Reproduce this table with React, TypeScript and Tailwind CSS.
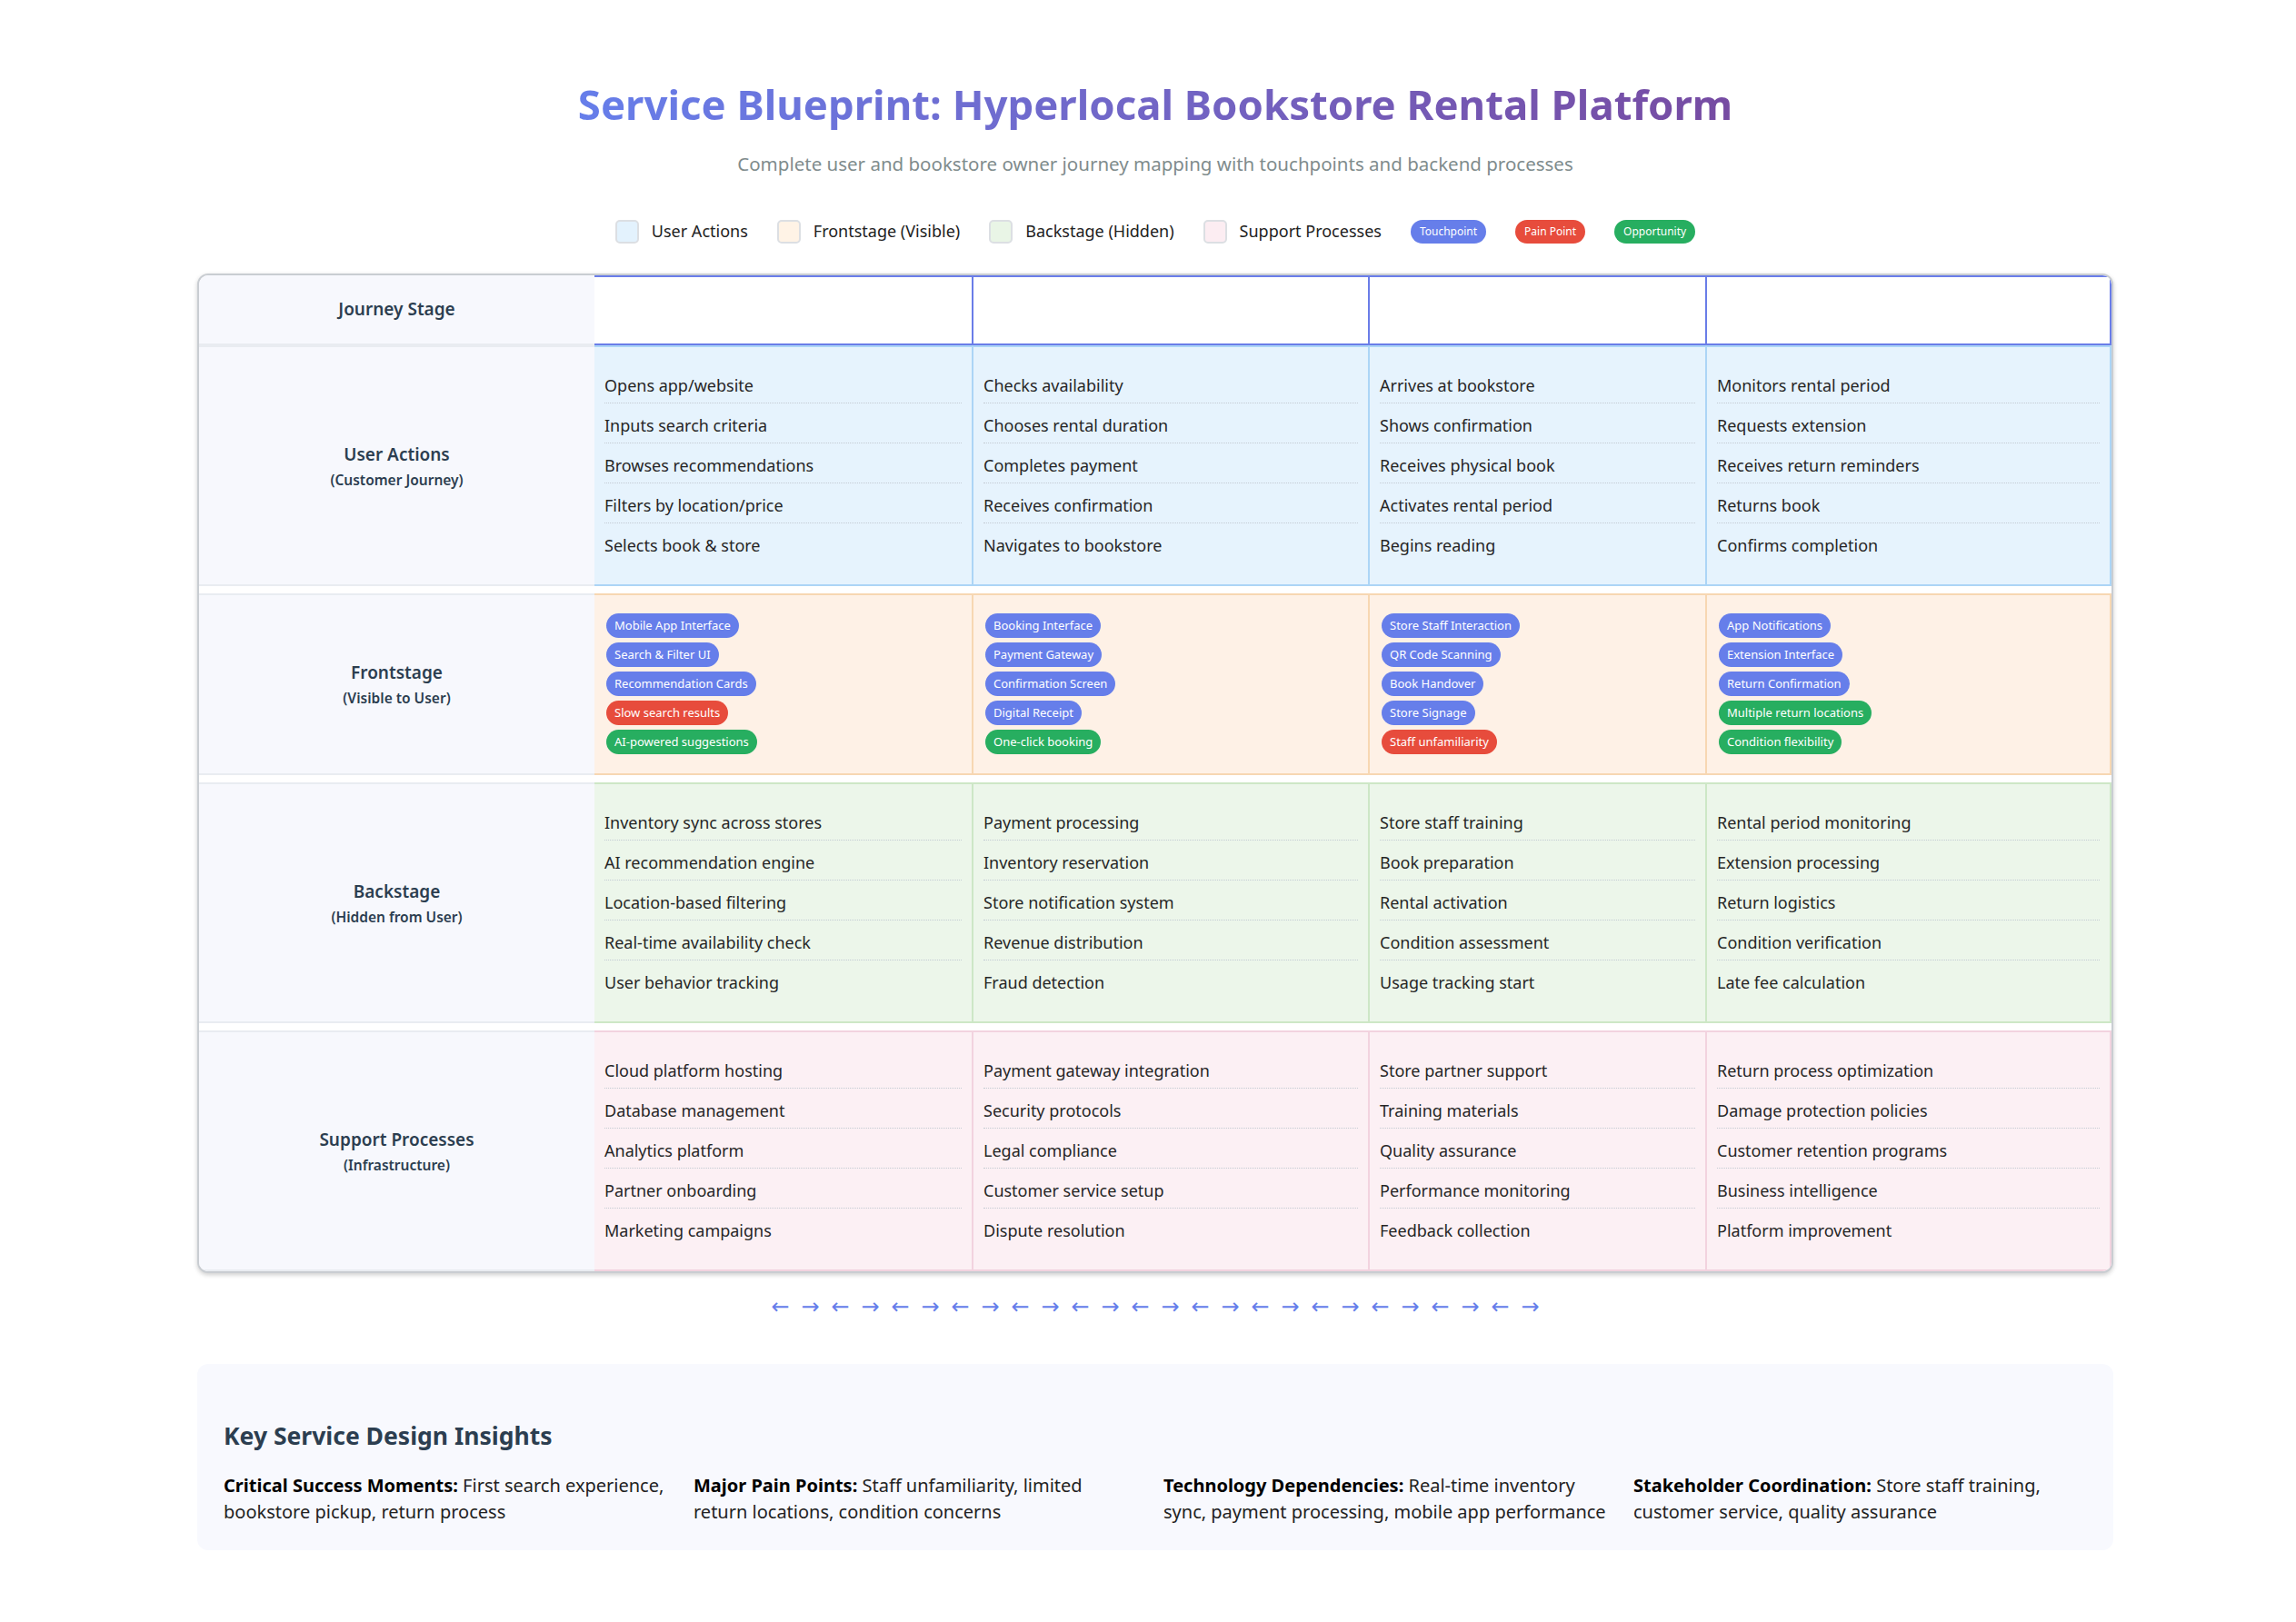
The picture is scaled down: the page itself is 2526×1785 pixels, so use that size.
import React from 'react';

type Kind = 't' | 'p' | 'o';

interface Lane {
  title: string;
  sub: string;
  cell: string;
  columns: string[][];
}

// ブループリントの各レーン（フロントステージはピル表示なので別扱い）
const userActions: Lane = {
  title: 'User Actions',
  sub: '(Customer Journey)',
  cell: 'bg-[#e6f3fd] border-[#acd5f6]',
  columns: [
    ['Opens app/website', 'Inputs search criteria', 'Browses recommendations', 'Filters by location/price', 'Selects book & store'],
    ['Checks availability', 'Chooses rental duration', 'Completes payment', 'Receives confirmation', 'Navigates to bookstore'],
    ['Arrives at bookstore', 'Shows confirmation', 'Receives physical book', 'Activates rental period', 'Begins reading'],
    ['Monitors rental period', 'Requests extension', 'Receives return reminders', 'Returns book', 'Confirms completion'],
  ],
};

const backstage: Lane = {
  title: 'Backstage',
  sub: '(Hidden from User)',
  cell: 'bg-[#ecf6ea] border-[#cde7c6]',
  columns: [
    ['Inventory sync across stores', 'AI recommendation engine', 'Location-based filtering', 'Real-time availability check', 'User behavior tracking'],
    ['Payment processing', 'Inventory reservation', 'Store notification system', 'Revenue distribution', 'Fraud detection'],
    ['Store staff training', 'Book preparation', 'Rental activation', 'Condition assessment', 'Usage tracking start'],
    ['Rental period monitoring', 'Extension processing', 'Return logistics', 'Condition verification', 'Late fee calculation'],
  ],
};

const support: Lane = {
  title: 'Support Processes',
  sub: '(Infrastructure)',
  cell: 'bg-[#fcf0f4] border-[#f2d3df]',
  columns: [
    ['Cloud platform hosting', 'Database management', 'Analytics platform', 'Partner onboarding', 'Marketing campaigns'],
    ['Payment gateway integration', 'Security protocols', 'Legal compliance', 'Customer service setup', 'Dispute resolution'],
    ['Store partner support', 'Training materials', 'Quality assurance', 'Performance monitoring', 'Feedback collection'],
    ['Return process optimization', 'Damage protection policies', 'Customer retention programs', 'Business intelligence', 'Platform improvement'],
  ],
};

const frontstage: [string, Kind][][] = [
  [['Mobile App Interface', 't'], ['Search & Filter UI', 't'], ['Recommendation Cards', 't'], ['Slow search results', 'p'], ['AI-powered suggestions', 'o']],
  [['Booking Interface', 't'], ['Payment Gateway', 't'], ['Confirmation Screen', 't'], ['Digital Receipt', 't'], ['One-click booking', 'o']],
  [['Store Staff Interaction', 't'], ['QR Code Scanning', 't'], ['Book Handover', 't'], ['Store Signage', 't'], ['Staff unfamiliarity', 'p']],
  [['App Notifications', 't'], ['Extension Interface', 't'], ['Return Confirmation', 't'], ['Multiple return locations', 'o'], ['Condition flexibility', 'o']],
];

const pillColor: Record<Kind, string> = {
  t: 'bg-[#667eea]',
  p: 'bg-[#e74c3c]',
  o: 'bg-[#27ae60]',
};

const insights = [
  ['Critical Success Moments:', 'First search experience, bookstore pickup, return process'],
  ['Major Pain Points:', 'Staff unfamiliarity, limited return locations, condition concerns'],
  ['Technology Dependencies:', 'Real-time inventory sync, payment processing, mobile app performance'],
  ['Stakeholder Coordination:', 'Store staff training, customer service, quality assurance'],
];

const GRID = 'grid grid-cols-[435px_417px_436px_371px_445px]';

const LaneLabel: React.FC<{ title: string; sub: string }> = ({ title, sub }) => (
  <div className="flex flex-col items-center justify-center gap-[6px] bg-[#f7f8fd] border-y-2 border-[#e9ecf1] text-[#2c3e50]">
    <div className="text-[19px] font-semibold leading-[24px]">{title}</div>
    <div className="text-[15.5px] font-semibold leading-[20px]">{sub}</div>
  </div>
);

const ListLane: React.FC<{ lane: Lane; first?: boolean }> = ({ lane, first }) => (
  <div className={`${GRID} ${first ? '' : 'mt-2'}`}>
    <LaneLabel title={lane.title} sub={lane.sub} />
    {lane.columns.map((items, ci) => (
      <div key={ci} className={`border-y-2 border-r-2 px-[11px] pt-6 pb-6 ${lane.cell}`}>
        <ul>
          {items.map((it, i) => (
            <li
              key={it}
              className={
                i < items.length - 1
                  ? 'py-[6px] mb-[6px] leading-[25px] border-b border-dotted border-[#c3cbd3]'
                  : 'py-[6px] leading-[25px]'
              }
            >
              {it}
            </li>
          ))}
        </ul>
      </div>
    ))}
  </div>
);

export default function App() {
  return (
    <div
      className="min-h-[1785px] bg-white text-[#262626] text-[18px]"
      style={{ fontFamily: '"Noto Sans", "Open Sans", sans-serif' }}
    >
      <div className="flex justify-center pl-[16px] pt-[87px]">
        <div className="w-[2108px]">
          {/* ヘッダー */}
          <h1 className="text-center text-[45.5px] font-bold leading-[54px]">
            <span className="bg-linear-to-r from-[#667eea] to-[#764ba2] bg-clip-text text-transparent">
              Service Blueprint: Hyperlocal Bookstore Rental Platform
            </span>
          </h1>
          <p className="mt-[25px] text-center text-[20.5px] leading-[28px] text-[#7f8c8d]">
            Complete user and bookstore owner journey mapping with touchpoints and backend processes
          </p>

          {/* 凡例 */}
          <div className="mt-[47px] flex items-center justify-center gap-[32px] text-[18px] text-[#222]">
            {[
              ['User Actions', 'bg-[#e3f2fd]'],
              ['Frontstage (Visible)', 'bg-[#fff3e6]'],
              ['Backstage (Hidden)', 'bg-[#e9f5e6]'],
              ['Support Processes', 'bg-[#fcedf2]'],
            ].map(([label, bg]) => (
              <div key={label} className="flex items-center gap-[14px]">
                <span className={`h-[26px] w-[26px] rounded-[5px] border-2 border-[#dcdfe3] ${bg}`} />
                <span>{label}</span>
              </div>
            ))}
            <span className="rounded-full bg-[#667eea] px-[10px] text-[12px] leading-[26px] text-white">Touchpoint</span>
            <span className="rounded-full bg-[#e74c3c] px-[10px] text-[12px] leading-[26px] text-white">Pain Point</span>
            <span className="rounded-full bg-[#27ae60] px-[10px] text-[12px] leading-[26px] text-white">Opportunity</span>
          </div>

          {/* ブループリント本体 */}
          <div className="mt-[33px] overflow-hidden rounded-[12px] border-2 border-[#c9cdd2] bg-white shadow-[0_2px_5px_rgba(0,0,0,0.2)]">
            <div className={`${GRID} h-[77px]`}>
              <div className="flex items-center justify-center bg-[#f7f8fd] border-b-2 border-[#e9ecf1] text-[19px] font-semibold text-[#2c3e50]">
                Journey Stage
              </div>
              {[0, 1, 2, 3].map((i) => (
                <div key={i} className="border-y-2 border-r-2 border-[#6a7de8] bg-white" />
              ))}
            </div>

            <ListLane lane={userActions} first />

            <div className={`${GRID} mt-2`}>
              <LaneLabel title="Frontstage" sub="(Visible to User)" />
              {frontstage.map((pills, ci) => (
                <div key={ci} className="flex flex-col items-start gap-[5px] border-y-2 border-r-2 border-[#f7d7b2] bg-[#fef1e6] px-[13px] pt-[20px] pb-[21px]">
                  {pills.map(([label, kind]) => (
                    <span
                      key={label}
                      className={`rounded-full px-[9px] text-[13px] leading-[27px] text-white ${pillColor[kind]}`}
                    >
                      {label}
                    </span>
                  ))}
                </div>
              ))}
            </div>

            <ListLane lane={backstage} />
            <ListLane lane={support} />
          </div>

          {/* フロー矢印 */}
          <div
            className="mt-[22px] flex justify-center gap-[13px] text-[24px] leading-[30px] text-[#667eea]"
            style={{ fontFamily: '"DejaVu Sans", sans-serif' }}
          >
            {Array.from({ length: 26 }).map((_, i) => (
              <span key={i} className="w-[20px] text-center">
                {i % 2 === 0 ? '←' : '→'}
              </span>
            ))}
          </div>

          {/* インサイト */}
          <div className="mt-[48px] rounded-[12px] bg-[#f8f9fe] px-[29px] pt-[61px] pb-[28px]">
            <h3 className="text-[26.5px] font-bold leading-[36px] text-[#2c3e50]">Key Service Design Insights</h3>
            <div className="mt-[22px] grid grid-cols-[491px_491px_491px_491px] gap-[26px] text-[20px] leading-[29px] text-[#222]">
              {insights.map(([head, body]) => (
                <p key={head}>
                  <strong className="font-bold text-black">{head}</strong> {body}
                </p>
              ))}
            </div>
          </div>
        </div>
      </div>
    </div>
  );
}
